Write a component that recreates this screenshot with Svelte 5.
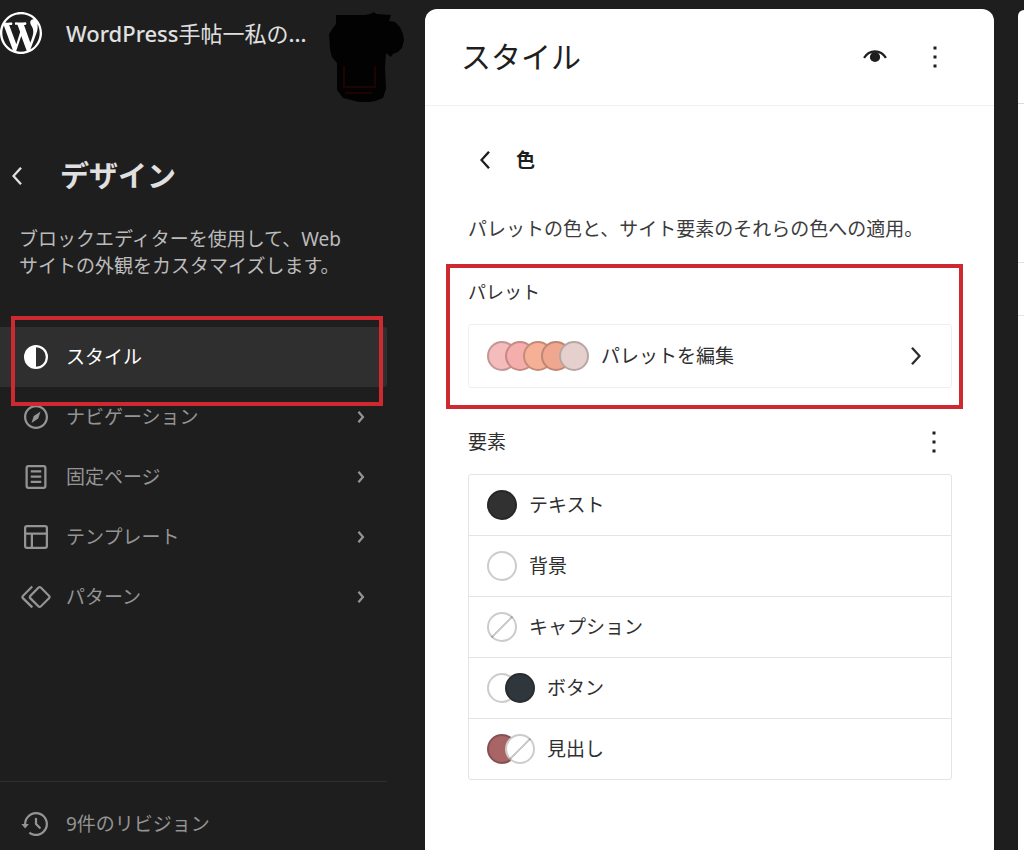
<script lang="ts">
  type MenuItem = { label: string; icon: string; active?: boolean };
  type ElementItem = { label: string; colors: (string | null)[] };

  const icons = {
    styles: 'M20 12a8 8 0 1 1-16 0 8 8 0 0 1 16 0Zm-1.5 0a6.5 6.5 0 0 1-6.5 6.5v-13a6.5 6.5 0 0 1 6.5 6.5Z',
    navigation:
      'M12 4c-4.4 0-8 3.6-8 8s3.6 8 8 8 8-3.6 8-8-3.6-8-8-8zm0 14.5c-3.6 0-6.5-2.9-6.5-6.5S8.4 5.5 12 5.5s6.5 2.9 6.5 6.5-2.9 6.5-6.5 6.5zM9 16l4.5-3L15 8.4l-4.5 3L9 16z',
    page: 'M15.5 7.5h-7V9h7V7.5Zm-7 3.5h7v1.5h-7V11Zm7 3.5h-7V16h7v-1.5ZM17 4H7a2 2 0 0 0-2 2v12a2 2 0 0 0 2 2h10a2 2 0 0 0 2-2V6a2 2 0 0 0-2-2ZM7 5.5h10a.5.5 0 0 1 .5.5v12a.5.5 0 0 1-.5.5H7a.5.5 0 0 1-.5-.5V6a.5.5 0 0 1 .5-.5Z',
    layout:
      'M18 5.5H6a.5.5 0 0 0-.5.5v3h13V6a.5.5 0 0 0-.5-.5zm.5 5H10v8h8a.5.5 0 0 0 .5-.5v-7.5zm-10 0h-3V18a.5.5 0 0 0 .5.5h2.5v-8zM6 4h12a2 2 0 0 1 2 2v12a2 2 0 0 1-2 2H6a2 2 0 0 1-2-2V6a2 2 0 0 1 2-2z',
    symbol:
      'M21.3 10.8l-5.6-5.6c-.7-.7-1.8-.7-2.5 0l-5.6 5.6c-.7.7-.7 1.8 0 2.5l5.6 5.6c.3.3.8.5 1.2.5s.9-.2 1.2-.5l5.6-5.6c.8-.7.8-1.9.1-2.5zm-1 1.4l-5.6 5.6c-.1.1-.3.1-.4 0l-5.6-5.6c-.1-.1-.1-.3 0-.4l5.6-5.6s.1-.1.2-.1.1 0 .2.1l5.6 5.6c.1.1.1.3 0 .4zm-16.6-.4L10 5.5l-1-1-6.3 6.3c-.7.7-.7 1.8 0 2.5L9 19.5l1.1-1.1-6.3-6.3c-.2 0-.2-.2-.1-.3z',
    backup:
      'M5.5 12h1.75l-2.5 3-2.5-3H4a8 8 0 1 1 3.134 6.35l.907-1.194A6.5 6.5 0 1 0 5.5 12zm9.53 1.97l-2.28-2.28V8.5a.75.75 0 0 0-1.5 0V12a.747.747 0 0 0 .218.529l2.502 2.502a.75.75 0 1 0 1.06-1.061z',
    chevronSmall:
      'M10.862 8.04L14.28 12.029L10.862 16.017L9.723 15.04L12.305 12.029L9.723 9.017L10.862 8.04Z',
    chevronRight: 'M10.6 6L9.4 7l4.6 5-4.6 5 1.2 1 5.4-6z',
    chevronLeft: 'M14.6 7l-1.2-1L8 12l5.4 6 1.2-1-4.6-5z',
    more: 'M13 19h-2v-2h2v2zm0-6h-2v-2h2v2zm0-6h-2V5h2v2z',
  };

  const menu: MenuItem[] = [
    { label: 'スタイル', icon: icons.styles, active: true },
    { label: 'ナビゲーション', icon: icons.navigation },
    { label: '固定ページ', icon: icons.page },
    { label: 'テンプレート', icon: icons.layout },
    { label: 'パターン', icon: icons.symbol },
  ];

  const palette = ['#f5bcbc', '#f5aeab', '#f6b096', '#f0a78f', '#e6d0ce'];

  // null means that no color is set
  const elements: ElementItem[] = [
    { label: 'テキスト', colors: ['#313131'] },
    { label: '背景', colors: ['#ffffff'] },
    { label: 'キャプション', colors: [null] },
    { label: 'ボタン', colors: ['#ffffff', '#30373c'] },
    { label: '見出し', colors: ['#a96565', null] },
  ];
</script>

{#snippet icon(d: string)}
  <svg class="icon" viewBox="0 0 24 24" fill="currentColor" aria-hidden="true">
    <path fill-rule="evenodd" {d} />
  </svg>
{/snippet}

{#snippet swatches(colors: (string | null)[])}
  <span class="swatches">
    {#each colors as color}
      <span class="swatch" class:unset={color === null} style:background-color={color}></span>
    {/each}
  </span>
{/snippet}

<div class="editor">
  <aside class="sidebar">
    <header class="site">
      <a class="logo" href="#dashboard" aria-label="WordPress">
        <svg viewBox="0 0 20 20" fill="currentColor" aria-hidden="true">
          <path d="M20 10c0-5.51-4.49-10-10-10C4.48 0 0 4.49 0 10c0 5.52 4.48 10 10 10 5.51 0 10-4.48 10-10zM7.78 15.37L4.37 6.22c.55-.02 1.17-.08 1.17-.08.5-.06.44-1.13-.06-1.11 0 0-1.45.11-2.37.11-.18 0-.37 0-.58-.01C4.12 2.69 6.87 1.11 10 1.11c2.33 0 4.45.87 6.05 2.34-.68-.11-1.65.39-1.65 1.58 0 .74.45 1.36.9 2.1.35.61.55 1.36.55 2.46 0 1.49-1.4 5-1.4 5l-3.03-8.37c.54-.02.82-.17.82-.17.5-.05.44-1.25-.06-1.22 0 0-1.44.12-2.38.12-.87 0-2.33-.12-2.33-.12-.5-.03-.56 1.2-.06 1.22l.92.08 1.26 3.41zM17.41 10c.24-.64.74-1.87.43-4.25.7 1.29 1.05 2.71 1.05 4.25 0 3.29-1.73 6.24-4.4 7.78.97-2.59 1.94-5.2 2.92-7.78zM6.1 18.09C3.12 16.65 1.11 13.53 1.11 10c0-1.3.23-2.48.72-3.59C3.25 10.3 4.67 14.2 6.1 18.09zm4.03-6.63l2.58 6.98c-.86.29-1.76.45-2.71.45-.79 0-1.57-.11-2.29-.33.81-2.38 1.62-4.74 2.42-7.1z" />
        </svg>
      </a>
      <a class="site-title" href="#site"><b>WordPress</b>手帖一私の<b>...</b></a>
      <svg class="camera" viewBox="0 0 76 90" aria-hidden="true">
        <path fill="#020202" d="M8 3h29l5-1 4-2 2 2 15 1-2 6 6 1 5 5 3 7 1 6-2 8-4 4-5 2-2 3-5-4-1 14 1 22-3 9-8 3-11 2-9-2-12-3-6-8V51l-5-6-2-8-1-15 4-6 3-4z" />
        <path fill="none" stroke="#1c0403" stroke-width="2" d="M16 54v21h31V54M17 81h27" />
      </svg>
    </header>

    <div class="heading">
      <button class="plain" aria-label="戻る">{@render icon(icons.chevronLeft)}</button>
      <h1>デザイン</h1>
    </div>
    <p class="intro">ブロックエディターを使用して、Web サイトの外観をカスタマイズします。</p>

    <nav>
      <ul>
        {#each menu as item}
          <li class:active={item.active}>
            <a class="row" href="#{item.label}">
              {@render icon(item.icon)}
              <span class="label">{item.label}</span>
              {#if !item.active}{@render icon(icons.chevronSmall)}{/if}
            </a>
            {#if item.active}<span class="marker menu-marker"></span>{/if}
          </li>
        {/each}
      </ul>
    </nav>

    <footer>
      <a class="row" href="#revisions">
        {@render icon(icons.backup)}
        <span class="label">9件のリビジョン</span>
      </a>
    </footer>
  </aside>

  <main class="panel">
    <header class="panel-header">
      <h2>スタイル</h2>
      <button class="plain" aria-label="スタイルブック">
        <svg class="icon" viewBox="0 0 24 24" aria-hidden="true">
          <path fill="none" stroke="currentColor" stroke-width="1.5" d="M4.7 12.6C6.2 10.1 8.8 8.2 12 8.2s5.8 1.9 7.3 4.400" />
          <circle cx="12" cy="12" r="3.4" fill="currentColor" />
        </svg>
      </button>
      <button class="plain" aria-label="その他">{@render icon(icons.more)}</button>
    </header>

    <div class="content">
      <div class="crumb">
        <button class="plain" aria-label="スタイルに戻る">{@render icon(icons.chevronLeft)}</button>
        <h3>色</h3>
      </div>
      <p class="hint">パレットの色と、サイト要素のそれらの色への適用。</p>

      <section class="palette">
        <h4>パレット</h4>
        <button class="item card">
          {@render swatches(palette)}
          <span class="label">パレットを編集</span>
          {@render icon(icons.chevronRight)}
        </button>
        <span class="marker palette-marker"></span>
      </section>

      <section>
        <div class="section-head">
          <h4>要素</h4>
          <button class="plain" aria-label="要素のオプション">{@render icon(icons.more)}</button>
        </div>
        <ul class="card">
          {#each elements as element}
            <li>
              <button class="item">
                {@render swatches(element.colors)}
                <span class="label">{element.label}</span>
              </button>
            </li>
          {/each}
        </ul>
      </section>
    </div>
  </main>

  <div class="preview">
    <div class="preview-bar"></div>
    <div class="preview-head"></div>
    <div class="preview-block"></div>
  </div>
</div>

<style>
  :global(body) {
    margin: 0;
    background: #1e1e1e;
  }

  .editor {
    display: grid;
    grid-template-columns: 425px minmax(0, 1fr) 6px;
    min-height: 100vh;
    font-family: 'Noto Sans', 'Noto Sans CJK JP', sans-serif;
    font-size: 19px;
    line-height: 27px;
    color: #1e1e1e;
  }

  h1, h2, h3, h4, p, ul {
    margin: 0;
    padding: 0;
  }

  ul { list-style: none; }
  a { color: inherit; text-decoration: none; }

  button {
    border: 0;
    padding: 0;
    background: none;
    font: inherit;
    color: inherit;
    cursor: pointer;
  }

  .plain { display: flex; }

  .icon {
    display: block;
    flex: none;
    width: 36px;
    height: 36px;
  }

  .label {
    flex: 1;
    text-align: left;
  }

  .marker {
    position: absolute;
    z-index: 1;
    border: 4px solid #ce2830;
    pointer-events: none;
  }

  /* Sidebar */
  .sidebar {
    display: flex;
    flex-direction: column;
    padding-right: 38px;
    box-sizing: border-box;
    color: #949494;
  }

  .site {
    display: flex;
    align-items: flex-start;
    height: 90px;
    padding-top: 12px;
    margin-right: -17px;
    color: #e0e0e0;
  }

  .logo {
    width: 42px;
    color: #fff;
  }

  .logo svg { display: block; }

  .site-title {
    flex: 1;
    margin-left: 24px;
    font-size: 22px;
    line-height: 42px;
    white-space: nowrap;
  }

  .site-title b { font-weight: 500; }

  .camera {
    flex: none;
    width: 76px;
    height: 90px;
  }

  .heading {
    display: flex;
    align-items: center;
    gap: 24px;
    margin-top: 56px;
    color: #e0e0e0;
  }

  h1 {
    font-size: 29px;
    line-height: 36px;
    font-weight: 700;
  }

  .intro {
    margin: 32px 36px 0 19px;
    color: #bbb;
  }

  nav { margin-top: 47px; }
  nav li { position: relative; }

  .row {
    display: flex;
    align-items: center;
    gap: 12px;
    padding: 12px 8px 12px 18px;
  }

  .active .row {
    border-radius: 0 3px 3px 0;
    background: #2f2f2f;
    color: #fff;
  }

  .menu-marker {
    top: -11px;
    right: 4px;
    bottom: -19px;
    left: 11px;
  }

  footer {
    margin-top: auto;
    padding-top: 12px;
    border-top: 1px solid #2f2f2f;
  }

  footer .row { padding-bottom: 8px; }

  /* Styles panel */
  .panel {
    margin: 9px 24px 0 0;
    border-radius: 12px 12px 0 0;
    background: #fff;
  }

  .panel-header {
    display: flex;
    align-items: center;
    gap: 24px;
    padding: 30px 41px 30px 36px;
    border-bottom: 1px solid #f0f0f0;
  }

  h2 {
    flex: 1;
    font-size: 30px;
    line-height: 36px;
    font-weight: 400;
  }

  .content { padding: 36px 42px 36px 43px; }

  .crumb {
    display: flex;
    align-items: center;
    gap: 12px;
  }

  h3 {
    font-size: 19px;
    font-weight: 700;
  }

  .hint {
    margin-top: 38px;
    color: #3c3c3c;
  }

  h4 {
    font-size: 19px;
    font-weight: 400;
    color: #2f2f2f;
  }

  .palette {
    position: relative;
    margin-top: 36px;
  }

  .palette h4 {
    margin-bottom: 18px;
    font-size: 18px;
  }

  .palette-marker {
    top: -15px;
    right: -11px;
    bottom: -21px;
    left: -22px;
  }

  .card {
    border: 1px solid #e4e4e4;
    border-radius: 3px;
  }

  .item {
    display: flex;
    align-items: center;
    gap: 12px;
    width: 100%;
    height: 60px;
    padding: 0 18px;
    box-sizing: border-box;
    color: #2f2f2f;
  }

  .item.card {
    height: 64px;
    border-color: #efefef;
  }

  .card li + li { border-top: 1px solid #e4e4e4; }

  .swatches { display: flex; }

  .swatch {
    width: 30px;
    height: 30px;
    box-sizing: border-box;
    border: 2px solid rgba(0, 0, 0, 0.2);
    border-radius: 50%;
  }

  .swatch + .swatch { margin-left: -12px; }

  .unset {
    background: linear-gradient(-45deg, #fff 48%, #ccc 48%, #ccc 52%, #fff 52%);
  }

  .section-head {
    display: flex;
    align-items: center;
    justify-content: space-between;
    margin: 36px 0 14px;
  }

  /* Edge of the site preview */
  .preview {
    margin-top: 10px;
    border-radius: 12px 0 0 0;
    background: #fff;
  }

  .preview-bar { height: 93px; border-bottom: 1px solid #ddd; }
  .preview-head { height: 158px; border-bottom: 1px solid #e4e4e4; }
  .preview-block { height: 52px; border-bottom: 1px solid #e4e4e4; }
</style>
